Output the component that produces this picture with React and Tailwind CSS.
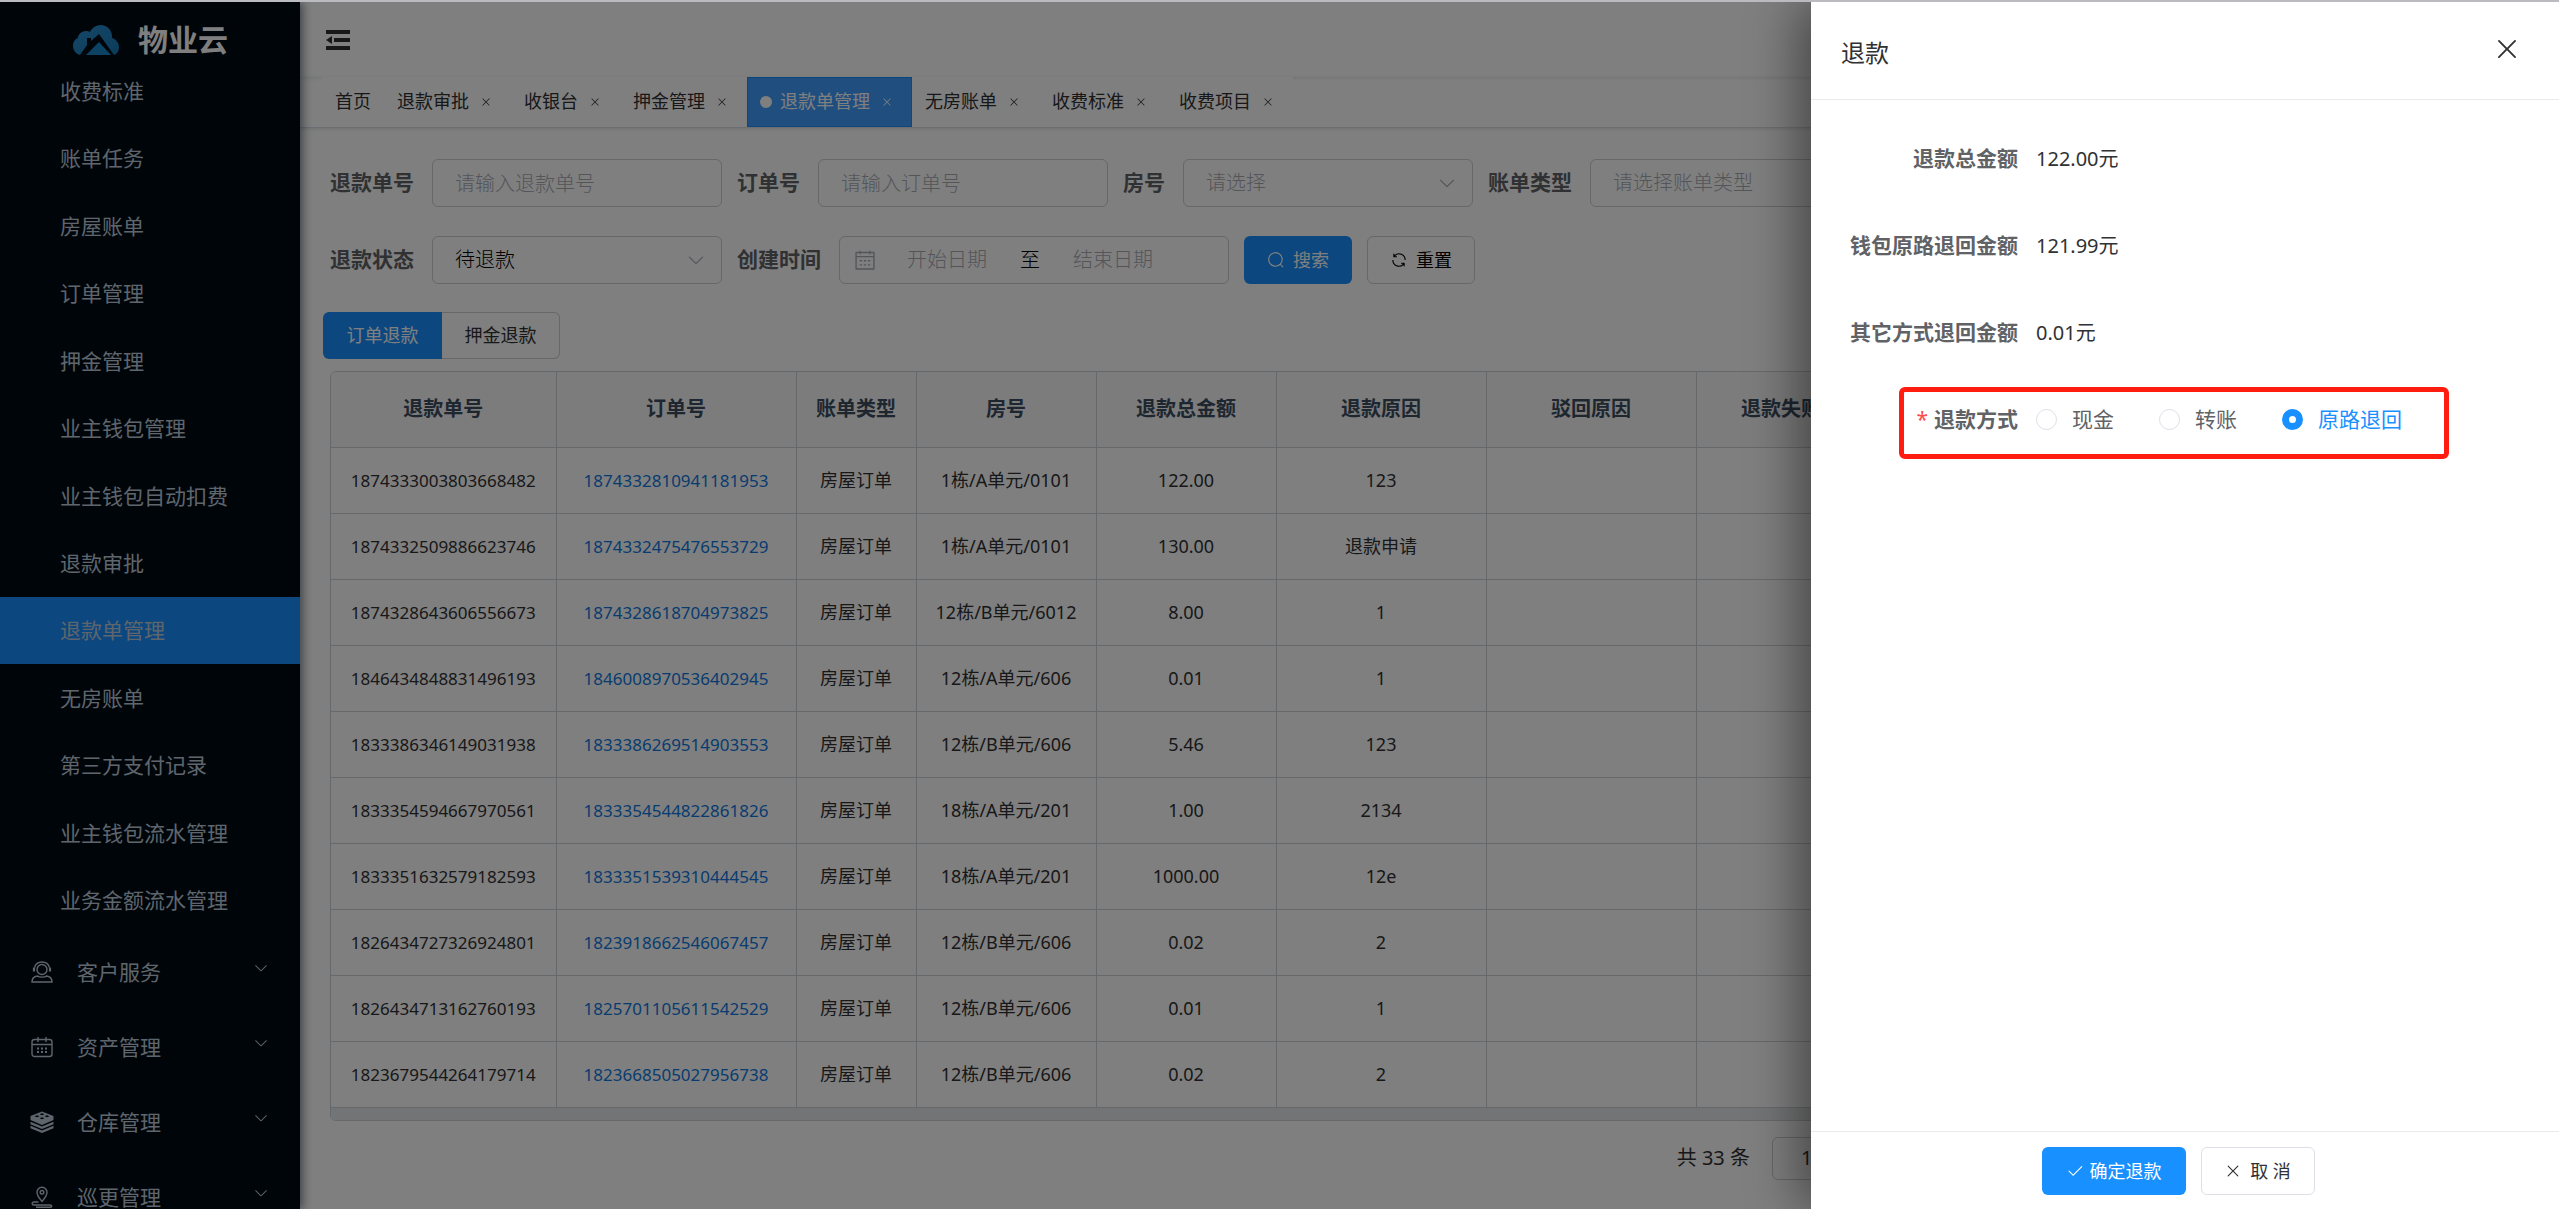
import React, { useState } from 'react'

// Element Plus icon shapes, all on a 1024 grid
const icons = {
  close: 'M764.288 214.592 512 466.88 259.712 214.592a31.936 31.936 0 0 0-45.12 45.12L466.752 512 214.528 764.224a31.936 31.936 0 1 0 45.12 45.184L512 557.184l252.288 252.288a31.936 31.936 0 0 0 45.12-45.12L557.12 512.064l252.288-252.352a31.936 31.936 0 1 0-45.12-45.184z',
  check: 'M406.656 706.944 195.84 496.256a32 32 0 1 0-45.248 45.248l256 256 512-512a32 32 0 0 0-45.248-45.248L406.592 706.944z',
  arrowDown: 'M831.872 340.864 512 652.672 192.128 340.864a30.592 30.592 0 0 0-42.752 0 29.12 29.12 0 0 0 0 41.6L489.664 714.24a32 32 0 0 0 44.672 0l340.288-331.712a29.12 29.12 0 0 0 0-41.728 30.592 30.592 0 0 0-42.752 0z',
  search: 'm795.904 750.72 124.992 124.928a32 32 0 0 1-45.248 45.248L750.656 795.904a416 416 0 1 1 45.248-45.248zM480 832a352 352 0 1 0 0-704 352 352 0 0 0 0 704z',
  refresh: 'M771.776 794.88A384 384 0 0 1 128 512h64a320 320 0 0 0 555.712 216.448H654.72a32 32 0 1 1 0-64h149.056a32 32 0 0 1 32 32v148.928a32 32 0 1 1-64 0v-50.56zM276.288 295.616h92.992a32 32 0 0 1 0 64H220.16a32 32 0 0 1-32-32V178.56a32 32 0 0 1 64 0v50.56A384 384 0 0 1 896.128 512h-64a320 320 0 0 0-555.776-216.384z',
  calendar: 'M128 384v512h768V192H768v32a32 32 0 1 1-64 0v-32H320v32a32 32 0 0 1-64 0v-32H128v128h768v64H128zm192-256h384V96a32 32 0 1 1 64 0v32h160a32 32 0 0 1 32 32v768a32 32 0 0 1-32 32H96a32 32 0 0 1-32-32V160a32 32 0 0 1 32-32h160V96a32 32 0 0 1 64 0v32zm-32 384h64a32 32 0 0 1 0 64h-64a32 32 0 0 1 0-64zm0 192h64a32 32 0 1 1 0 64h-64a32 32 0 1 1 0-64zm192-192h64a32 32 0 0 1 0 64h-64a32 32 0 0 1 0-64zm0 192h64a32 32 0 1 1 0 64h-64a32 32 0 1 1 0-64zm192-192h64a32 32 0 1 1 0 64h-64a32 32 0 1 1 0-64zm0 192h64a32 32 0 1 1 0 64h-64a32 32 0 1 1 0-64z',
}

const Icon = ({ name, className }) => (
  <svg viewBox="0 0 1024 1024" fill="currentColor" className={className} aria-hidden="true">
    <path d={icons[name]} />
  </svg>
)

const Logo = () => (
  <svg viewBox="0 0 46 30" className="w-[46px] h-[30px]" aria-hidden="true">
    <defs>
      <linearGradient id="cloud" x1="0" y1="0" x2="1" y2="1">
        <stop offset="0" stopColor="#2f8fd0" />
        <stop offset="1" stopColor="#1478b4" />
      </linearGradient>
    </defs>
    <path
      fill="url(#cloud)"
      d="M7 30C3 29 0 25 0 21c0-4 2-7 5-8 0-4 4-7 8-7 1 0 3 0 4 1C19 3 23 0 28 0c6 0 11 5 11 11v2c4 1 7 5 7 9 0 4-2 7-5 8L26 9l-8 7v-3h-4v7z"
    />
    <path fill="#1b86c4" d="M26 17l12 13H13z" />
  </svg>
)

const ServiceIcon = () => (
  <svg viewBox="0 0 22 22" fill="none" stroke="currentColor" strokeWidth="1.4" className="w-[22px] h-[22px]">
    <circle cx="11" cy="8.5" r="5" />
    <path d="M3.500 6.500C4.500 3 7.500 1 11 1s6.500 2 7.500 5.500" />
    <path d="M3 6.500v4M19 6.500v4" strokeWidth="2.200" />
    <path d="M1 21c0-3.500 2-5.500 5.500-6 1.500 1.500 7.500 1.500 9 0 3.500.5 5.500 2.500 5.500 6z" />
  </svg>
)

const AssetIcon = () => (
  <svg viewBox="0 0 22 22" fill="none" stroke="currentColor" strokeWidth="1.4" className="w-[22px] h-[22px]">
    <rect x="1" y="3.500" width="20" height="17" rx="2.500" />
    <path d="M1 8.500h20M7 1v5M15 1v5" />
    <path d="M6 12.500h2M10 12.500h2M14 12.500h2M6 16h2M10 16h2M14 16h2" strokeWidth="1.800" />
  </svg>
)

const StoreIcon = () => (
  <svg viewBox="0 0 24 22" fill="currentColor" className="w-6 h-[22px]">
    <path
      fillRule="evenodd"
      d="M12 .5 23.500 5v4L12 14 .5 9V5zM12 2.200l-2.500 1 2.500 1 2.500-1zM7 4.200l-2.500 1 2.500 1 2.500-1zM17 4.200l-2.500 1 2.500 1 2.500-1zM12 6.200l-2.500 1 2.500 1 2.500-1z"
    />
    <path d="M.5 10.800 12 15.500l11.500-4.700v2.400L12 18 .5 13.200zM.5 14.800 12 19.500l11.500-4.700v2.400L12 22 .5 17.200z" />
  </svg>
)

const PatrolIcon = () => (
  <svg viewBox="0 0 22 22" fill="none" stroke="currentColor" strokeWidth="1.400" className="w-[22px] h-[22px]">
    <path d="M11 15.500C7.500 11.500 6 9 6 6.300a5 5 0 0 1 10 0c0 2.700-1.500 5.200-5 9.200z" />
    <circle cx="11" cy="6.300" r="1.800" />
    <path d="M7.500 16H3c-2.500 0-2.500 3 0 3h16c2.200 0 2.200 2.300 0 2.300H5" />
  </svg>
)

const menuItems = [
  '收费标准', '账单任务', '房屋账单', '订单管理', '押金管理', '业主钱包管理', '业主钱包自动扣费',
  '退款审批', '退款单管理', '无房账单', '第三方支付记录', '业主钱包流水管理', '业务金额流水管理',
]

const menuGroups = [
  { title: '客户服务', icon: <ServiceIcon /> },
  { title: '资产管理', icon: <AssetIcon /> },
  { title: '仓库管理', icon: <StoreIcon /> },
  { title: '巡更管理', icon: <PatrolIcon /> },
]

const tabs = ['首页', '退款审批', '收银台', '押金管理', '退款单管理', '无房账单', '收费标准', '收费项目']

const columns = ['退款单号', '订单号', '账单类型', '房号', '退款总金额', '退款原因', '驳回原因', '退款失败原因']

const rows = [
  ['1874333003803668482', '1874332810941181953', '房屋订单', '1栋/A单元/0101', '122.00', '123'],
  ['1874332509886623746', '1874332475476553729', '房屋订单', '1栋/A单元/0101', '130.00', '退款申请'],
  ['1874328643606556673', '1874328618704973825', '房屋订单', '12栋/B单元/6012', '8.00', '1'],
  ['1846434848831496193', '1846008970536402945', '房屋订单', '12栋/A单元/606', '0.01', '1'],
  ['1833386346149031938', '1833386269514903553', '房屋订单', '12栋/B单元/606', '5.46', '123'],
  ['1833354594667970561', '1833354544822861826', '房屋订单', '18栋/A单元/201', '1.00', '2134'],
  ['1833351632579182593', '1833351539310444545', '房屋订单', '18栋/A单元/201', '1000.00', '12e'],
  ['1826434727326924801', '1823918662546067457', '房屋订单', '12栋/B单元/606', '0.02', '2'],
  ['1826434713162760193', '1825701105611542529', '房屋订单', '12栋/B单元/606', '0.01', '1'],
  ['1823679544264179714', '1823668505027956738', '房屋订单', '12栋/B单元/606', '0.02', '2'],
]

const amounts = [
  { label: '退款总金额', value: '122.00元' },
  { label: '钱包原路退回金额', value: '121.99元' },
  { label: '其它方式退回金额', value: '0.01元' },
]

const Sidebar = () => (
  <aside className="relative z-10 w-[300px] shrink-0 bg-[#000a14] text-[#bfcbd9] text-[21px] leading-8 shadow-[3px_0_9px_rgba(0,21,41,0.5)]">
    <div className="flex items-center gap-[19px] h-[55px] pt-[20px] pl-[73px]">
      <Logo />
      <h1 className="text-[30px] leading-[38px] font-bold text-white">物业云</h1>
    </div>
    <nav>
      <div className="flex flex-col h-[877px]">
        {menuItems.map((item) => (
          <a
            key={item}
            href="#"
            className={`flex flex-1 items-center pl-[60px] ${item === '退款单管理' ? 'bg-[#1890ff]' : ''}`}
          >
            {item}
          </a>
        ))}
      </div>
      {menuGroups.map((group) => (
        <button key={group.title} type="button" className="flex items-center w-full h-[75px] pl-[30px] pr-[31px]">
          <span className="flex justify-center w-6">{group.icon}</span>
          <span className="ml-[23px]">{group.title}</span>
          <Icon name="arrowDown" className="w-4 h-4 ml-auto mb-2" />
        </button>
      ))}
    </nav>
  </aside>
)

const TagsBar = () => (
  <div className="flex h-[51px] pl-[22px] border-b border-[#d8dce5] shadow-[0_1px_4px_rgba(0,0,0,0.12)]">
    <div className="flex bg-white text-[#303133] text-[18px]">
      {tabs.map((tab) => {
        const active = tab === '退款单管理'
        return (
          <div
            key={tab}
            className={`flex items-center px-3 border ${active ? 'bg-[#409eff] border-[#1890ff] text-white' : 'border-transparent'}`}
          >
            {active && <span className="w-3 h-3 mr-2 rounded-full bg-white" />}
            <a href="#" className="pb-[2px]">{tab}</a>
            {tab !== '首页' && (
              <button type="button" aria-label={`关闭${tab}`} className="flex justify-center w-6 ml-[5px]">
                <Icon name="close" className="w-3 h-3" />
              </button>
            )}
          </div>
        )
      })}
    </div>
  </div>
)

const labelClass = 'mr-[18px] text-[21px] font-bold text-[#606266] whitespace-nowrap'
const fieldClass = 'w-[290px] h-12 px-[22px] rounded-md border border-[#ccced6] bg-white text-[20px] font-light placeholder:text-[#a8abb2]'

const SelectBox = ({ id, options, placeholder }) => (
  <div className="relative">
    <select id={id} className={`${fieldClass} appearance-none ${placeholder ? 'text-[#a8abb2]' : 'text-black'}`}>
      {options.map((option) => <option key={option}>{option}</option>)}
    </select>
    <Icon name="arrowDown" className="absolute right-4 top-[14px] w-5 h-5 text-[#a8abb2] pointer-events-none" />
  </div>
)

const SearchForm = () => (
  <form className="flex flex-col gap-[29px] pl-[7px]">
    <div className="flex gap-[15px]">
      <div className="flex items-center">
        <label htmlFor="refundNo" className={labelClass}>退款单号</label>
        <input id="refundNo" className={fieldClass} placeholder="请输入退款单号" />
      </div>
      <div className="flex items-center">
        <label htmlFor="orderNo" className={labelClass}>订单号</label>
        <input id="orderNo" className={fieldClass} placeholder="请输入订单号" />
      </div>
      <div className="flex items-center">
        <label htmlFor="room" className={labelClass}>房号</label>
        <SelectBox id="room" options={['请选择']} placeholder />
      </div>
      <div className="flex items-center">
        <label htmlFor="billType" className={labelClass}>账单类型</label>
        <SelectBox id="billType" options={['请选择账单类型']} placeholder />
      </div>
    </div>
    <div className="flex gap-[15px]">
      <div className="flex items-center">
        <label htmlFor="status" className={labelClass}>退款状态</label>
        <SelectBox id="status" options={['待退款']} />
      </div>
      <div className="flex items-center">
        <label htmlFor="startDate" className={labelClass}>创建时间</label>
        <div className="flex items-center w-[390px] h-12 px-[14px] rounded-md border border-[#ccced6] text-[20px] font-light">
          <Icon name="calendar" className="w-[22px] h-[22px] text-[#a8abb2]" />
          <input id="startDate" className="w-[142px] text-center placeholder:text-[#a8abb2]" placeholder="开始日期" />
          <span className="w-6 text-center text-black">至</span>
          <input aria-label="结束日期" className="w-[142px] text-center placeholder:text-[#a8abb2]" placeholder="结束日期" />
        </div>
      </div>
      <button type="button" className="flex items-center justify-center gap-2 w-[108px] h-12 rounded-md bg-[#1890ff] text-white text-[18px]">
        <Icon name="search" className="w-[18px] h-[18px]" />
        搜索
      </button>
      <button type="button" className="flex items-center justify-center gap-2 w-[108px] h-12 rounded-md border border-[#ccced6] text-black text-[18px]">
        <Icon name="refresh" className="w-[18px] h-[18px]" />
        重置
      </button>
    </div>
  </form>
)

const RefundTable = () => (
  <div className="mx-[7px] mt-3 rounded-md border border-[#ccd2d6] overflow-hidden">
    <table className="table-fixed w-[1575px] border-collapse text-center">
      <colgroup>
        <col className="w-[225px]" />
        <col className="w-[240px]" />
        <col className="w-[120px]" />
        <col className="w-[180px]" />
        <col className="w-[180px]" />
        <col className="w-[210px]" />
        <col className="w-[210px]" />
        <col className="w-[210px]" />
      </colgroup>
      <thead>
        <tr className="h-[75px] bg-[#f8f8f9] text-[#3c4c60] text-[20px]">
          {columns.map((column) => (
            <th key={column} className="border-r border-b border-[#ccd2d6] font-bold whitespace-nowrap">{column}</th>
          ))}
        </tr>
      </thead>
      <tbody>
        {rows.map((row) => (
          <tr key={row[0]} className="h-[66px] text-[18px] text-[#303133]">
            {columns.map((column, i) => (
              <td key={column} className="border-r border-b border-[#ccd2d6] whitespace-nowrap">
                {i === 0 && <span className="text-[17px]">{row[0]}</span>}
                {i === 1 && <a href="#" className="text-[17px] text-[#1078e0]">{row[1]}</a>}
                {i > 1 && row[i]}
              </td>
            ))}
          </tr>
        ))}
      </tbody>
    </table>
    <div className="h-3 bg-[#e6e8eb]" />
  </div>
)

const RefundDrawer = ({ method, setMethod }) => (
  <section
    role="dialog"
    aria-label="退款"
    className="absolute inset-y-0 right-0 z-30 flex flex-col w-[748px] bg-white text-[#303133] shadow-[-12px_0_48px_rgba(0,0,0,0.45)]"
  >
    <header className="flex items-center justify-between h-[98px] pl-[30px] pr-[37px] pb-1 border-b border-[#e8eaec]">
      <h2 className="text-[24px] leading-8 pt-2">退款</h2>
      <button type="button" aria-label="关闭">
        <Icon name="close" className="w-[30px] h-[30px]" />
      </button>
    </header>

    <div className="flex-1 pt-[15px]">
      {amounts.map((item) => (
        <div key={item.label} className="flex items-center h-[87px]">
          <span className="w-[207px] mr-[18px] text-right text-[21px] font-bold text-[#606266]">{item.label}</span>
          <span className="text-[20px] text-[#303133]">{item.value}</span>
        </div>
      ))}
      <fieldset className="relative">
        <div className="flex items-center h-[87px] text-[21px]">
          <span className="w-[207px] mr-[18px] text-right font-bold text-[#606266]">
            <span className="mr-[6px] font-normal text-[#ff4949]">*</span>退款方式
          </span>
          <div className="flex gap-[45px]">
            {['现金', '转账', '原路退回'].map((name) => (
              <label key={name} className={`flex items-center gap-[15px] ${method === name ? 'text-[#1890ff]' : 'text-[#606266]'}`}>
                <input
                  type="radio"
                  name="method"
                  checked={method === name}
                  onChange={() => setMethod(name)}
                  className="appearance-none w-[21px] h-[21px] rounded-full border border-[#dcdfe6] bg-white checked:border-[7px] checked:border-[#1890ff]"
                />
                {name}
              </label>
            ))}
          </div>
        </div>
        <div className="absolute left-[88px] top-[11px] w-[550px] h-[72px] rounded-md border-[5px] border-[#ff1d10] pointer-events-none" />
      </fieldset>
    </div>

    <footer className="flex justify-center gap-[15px] pt-[15px] pb-[14px] pr-[14px] border-t border-[#e8eaec] text-[18px]">
      <button type="button" className="flex items-center justify-center gap-[6px] w-[144px] h-12 rounded-md bg-[#1890ff] text-white">
        <Icon name="check" className="w-[18px] h-[18px]" />
        确定退款
      </button>
      <button type="button" className="flex items-center justify-center gap-2 w-[114px] h-12 rounded-md border border-[#dcdfe6] text-[#303133]">
        <Icon name="close" className="w-[18px] h-[18px]" />
        取 消
      </button>
    </footer>
  </section>
)

const App = () => {
  const [method, setMethod] = useState('原路退回')

  return (
    <div className="flex flex-col h-screen overflow-hidden border-t-2 border-[#b9bbbe] font-['Noto_Sans','Noto_Sans_CJK_SC',sans-serif]">
      <div className="relative flex flex-1 min-h-0 overflow-hidden bg-white">
        <Sidebar />

        <main className="flex-1 min-w-0">
          <div className="flex items-center h-[75px] pl-[26px] shadow-[0_1px_4px_rgba(0,21,41,0.1)]">
            <button type="button" aria-label="收起菜单">
              <svg viewBox="0 0 24 20" fill="#303133" className="w-6 h-5">
                <path d="M0 0h24v4H0zM8 8h16v4H8zM0 16h24v4H0zM0 10l6-4v8z" />
              </svg>
            </button>
          </div>
          <TagsBar />

          <div className="px-[23px] pt-[31px]">
            <SearchForm />

            <div className="flex mt-7 text-[18px]">
              <button type="button" className="w-[119px] h-[47px] rounded-l-md bg-[#1890ff] text-white">订单退款</button>
              <button type="button" className="w-[118px] h-[47px] rounded-r-md border border-l-0 border-[#ccced6] text-[#303133]">押金退款</button>
            </div>

            <RefundTable />

            <div className="flex items-center justify-end gap-[22px] mt-4 pr-[572px] text-[20px] text-[#303133]">
              <span>共 33 条</span>
              <select aria-label="每页条数" className="w-[192px] h-[43px] pl-7 rounded-md border border-[#ccced6] appearance-none">
                <option>10条/页</option>
              </select>
            </div>
          </div>
        </main>

        <div className="absolute inset-0 z-20 bg-black/50" />
        <RefundDrawer method={method} setMethod={setMethod} />
      </div>
    </div>
  )
}

export default App
